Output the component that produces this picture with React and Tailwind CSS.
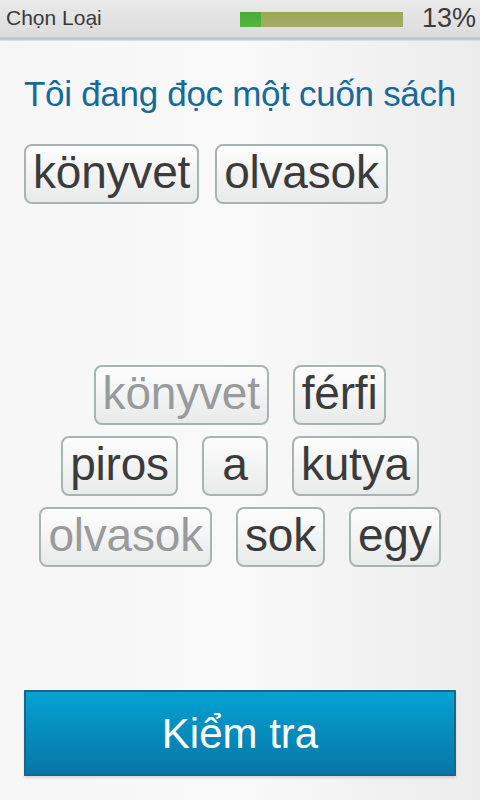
const answer = ['könyvet', 'olvasok'];

const bank = [
  [
    { w: 'könyvet', used: true },
    { w: 'férfi' },
  ],
  [{ w: 'piros' }, { w: 'a' }, { w: 'kutya' }],
  [{ w: 'olvasok', used: true }, { w: 'sok' }, { w: 'egy' }],
];

function Chip({ word, used }) {
  return (
    <div
      className={`h-[60px] min-w-[66px] px-[7px] flex items-center justify-center rounded-[8px] border-2 border-[#a9b3b3] bg-gradient-to-b from-[#fdfdfd] to-[#e9eaea] shadow-[inset_0_1px_0_#ffffff] text-[46px] leading-none tracking-[-0.2px] ${
        used ? 'text-[#999a9b]' : 'text-[#3b3b3b]'
      }`}
    >
      <span className="-mt-[4px]">{word}</span>
    </div>
  );
}

export default function App() {
  return (
    <div
      className="h-[800px] w-[480px] flex flex-col bg-gradient-to-r from-[#f6f6f6] via-[#f9f9f9] to-[#ececec] overflow-hidden"
      style={{ fontFamily: '"Liberation Sans", Arial, sans-serif' }}
    >
      {/* top bar */}
      <header className="h-[37px] flex items-center justify-between pl-[6px] pr-[4px] bg-gradient-to-b from-[#eaeaea] to-[#dcdcdc]">
        <span className="text-[21px] text-[#3a3a3a] -mt-[2px]">Chọn Loại</span>
        <div className="flex items-center gap-[19px]">
          <div className="w-[163px] h-[15px] flex bg-gradient-to-b from-[#9aaa55] to-[#a5ab6a] mt-[2px]">
            <div className="w-[21px] h-full bg-gradient-to-b from-[#47ad36] to-[#55b342]" />
          </div>
          <span className="text-[27px] text-[#3c3c3c] leading-none">13%</span>
        </div>
      </header>
      <div className="h-[4px] bg-gradient-to-b from-[#c9cfd4] via-[#b5c2cc] to-[#e3ebf2]" />

      <main className="flex-1 flex flex-col">
        <h1 className="mt-[33px] px-[24px] text-[35px] leading-[40px] text-[#166a9a] tracking-[-0.3px]">
          Tôi đang đọc một cuốn sách
        </h1>

        {/* answer */}
        <div className="mt-[30px] px-[24px] flex gap-[16px]">
          {answer.map((w) => (
            <Chip key={w} word={w} />
          ))}
        </div>

        {/* word bank */}
        <div className="mt-[161px] flex flex-col items-center gap-[11px]">
          {bank.map((row, i) => (
            <div key={i} className="flex gap-[24px]">
              {row.map((c) => (
                <Chip key={c.w} word={c.w} used={c.used} />
              ))}
            </div>
          ))}
        </div>
      </main>

      <button className="mx-[24px] mb-[24px] h-[86px] border-2 border-[#1d6586] bg-gradient-to-b from-[#05a2d3] to-[#0676a6] text-white text-[42px] shadow-[0_2px_2px_rgba(0,0,0,0.12)]">
        Kiểm tra
      </button>
    </div>
  );
}
